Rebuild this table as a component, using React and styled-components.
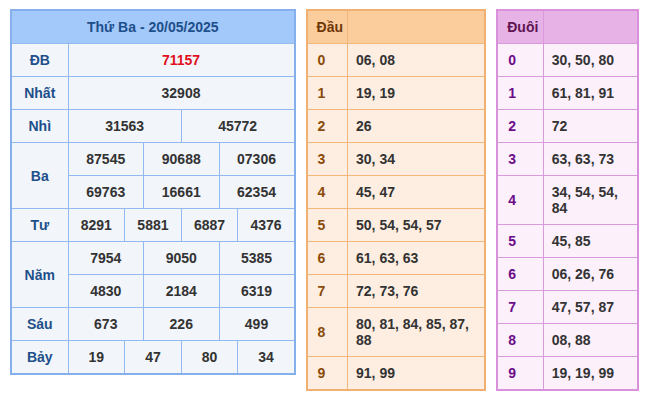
import React from 'react';
import styled, { createGlobalStyle } from 'styled-components';

const GlobalStyle = createGlobalStyle`
  body {
    margin: 0;
    background: #ffffff;
    font-family: 'Liberation Sans', Arial, sans-serif;
  }
`;

const Page = styled.div`
  display: flex;
  align-items: flex-start;
  gap: 10px;
  padding: 9px 10px;
`;

const themes = {
  blue: {
    outer: '#86b0ec',
    line: '#92b9f0',
    head: '#a3c8fa',
    cell: '#f2f5fa',
    label: '#1d4f8a',
    headText: '#1d4f8a',
  },
  orange: {
    outer: '#f0b072',
    line: '#f3b77c',
    head: '#fbcd9d',
    cell: '#fdeee1',
    label: '#8a4a09',
    headText: '#6e3708',
  },
  purple: {
    outer: '#d991dc',
    line: '#dc9ade',
    head: '#e7b2e6',
    cell: '#fcf0fb',
    label: '#6c0c88',
    headText: '#5e1552',
  },
};

const Table = styled.table`
  width: ${(p) => p.$width}px;
  border-collapse: collapse;
  table-layout: fixed;
  border: 2px solid ${(p) => themes[p.$tone].outer};
  font-size: 14px;
  font-weight: 700;
  line-height: 16px;
  color: #333333;

  td,
  th {
    border: 1px solid ${(p) => themes[p.$tone].line};
    background: ${(p) => themes[p.$tone].cell};
    padding: 8px 0;
  }

  th {
    background: ${(p) => themes[p.$tone].head};
    color: ${(p) => themes[p.$tone].headText};
    font-weight: 700;
  }
`;

const Title = styled.th`
  text-align: center;
`;

const Label = styled.td`
  text-align: ${(p) => (p.$left ? 'left' : 'center')};
  padding-left: ${(p) => (p.$left ? '10px' : '0')} !important;
  color: ${(p) => themes[p.$tone].label};
`;

const Num = styled.td`
  text-align: center;
  color: ${(p) => (p.$special ? '#e0101c' : '#333333')};
`;

const HeadCell = styled.th`
  text-align: left;
  padding-left: 9px !important;
`;

const Value = styled.td`
  text-align: left;
  padding-left: 8px !important;
  padding-right: 4px !important;
`;

const results = [
  { label: 'ĐB', values: ['71157'], special: true },
  { label: 'Nhất', values: ['32908'] },
  { label: 'Nhì', values: ['31563', '45772'] },
  { label: 'Ba', values: ['87545', '90688', '07306', '69763', '16661', '62354'], per: 3 },
  { label: 'Tư', values: ['8291', '5881', '6887', '4376'] },
  { label: 'Năm', values: ['7954', '9050', '5385', '4830', '2184', '6319'], per: 3 },
  { label: 'Sáu', values: ['673', '226', '499'] },
  { label: 'Bảy', values: ['19', '47', '80', '34'] },
];

const dau = [
  '06, 08',
  '19, 19',
  '26',
  '30, 34',
  '45, 47',
  '50, 54, 54, 57',
  '61, 63, 63',
  '72, 73, 76',
  '80, 81, 84, 85, 87, 88',
  '91, 99',
];

const duoi = [
  '30, 50, 80',
  '61, 81, 91',
  '72',
  '63, 63, 73',
  '34, 54, 54, 84',
  '45, 85',
  '06, 26, 76',
  '47, 57, 87',
  '08, 88',
  '19, 19, 99',
];

const ResultTable = () => {
  const rows = [];
  results.forEach((r) => {
    const per = r.per || r.values.length;
    const lines = [];
    for (let i = 0; i < r.values.length; i += per) {
      lines.push(r.values.slice(i, i + per));
    }
    lines.forEach((line, li) => (
      rows.push(
        <tr key={r.label + li}>
          {li === 0 && (
            <Label $tone="blue" rowSpan={lines.length}>
              {r.label}
            </Label>
          )}
          {line.map((v, vi) => (
            <Num key={vi} colSpan={12 / per} $special={r.special}>
              {v}
            </Num>
          ))}
        </tr>
      )
    ));
  });

  return (
    <Table $tone="blue" $width={286}>
      <colgroup>
        <col style={{ width: 57 }} />
        {Array.from({ length: 12 }).map((_, i) => (
          <col key={i} />
        ))}
      </colgroup>
      <thead>
        <tr>
          <Title colSpan={13}>Thứ Ba - 20/05/2025</Title>
        </tr>
      </thead>
      <tbody>{rows}</tbody>
    </Table>
  );
};

const LotoTable = ({ tone, title, data, width, labelWidth }) => (
  <Table $tone={tone} $width={width}>
    <colgroup>
      <col style={{ width: labelWidth }} />
      <col />
    </colgroup>
    <thead>
      <tr>
        <HeadCell>{title}</HeadCell>
        <th />
      </tr>
    </thead>
    <tbody>
      {data.map((v, i) => (
        <tr key={i}>
          <Label $tone={tone} $left>
            {i}
          </Label>
          <Value>{v}</Value>
        </tr>
      ))}
    </tbody>
  </Table>
);

const App = () => (
  <>
    <GlobalStyle />
    <Page>
      <ResultTable />
      <LotoTable tone="orange" title="Đầu" data={dau} width={181} labelWidth={41} />
      <LotoTable tone="purple" title="Đuôi" data={duoi} width={143} labelWidth={46} />
    </Page>
  </>
);

export default App;
